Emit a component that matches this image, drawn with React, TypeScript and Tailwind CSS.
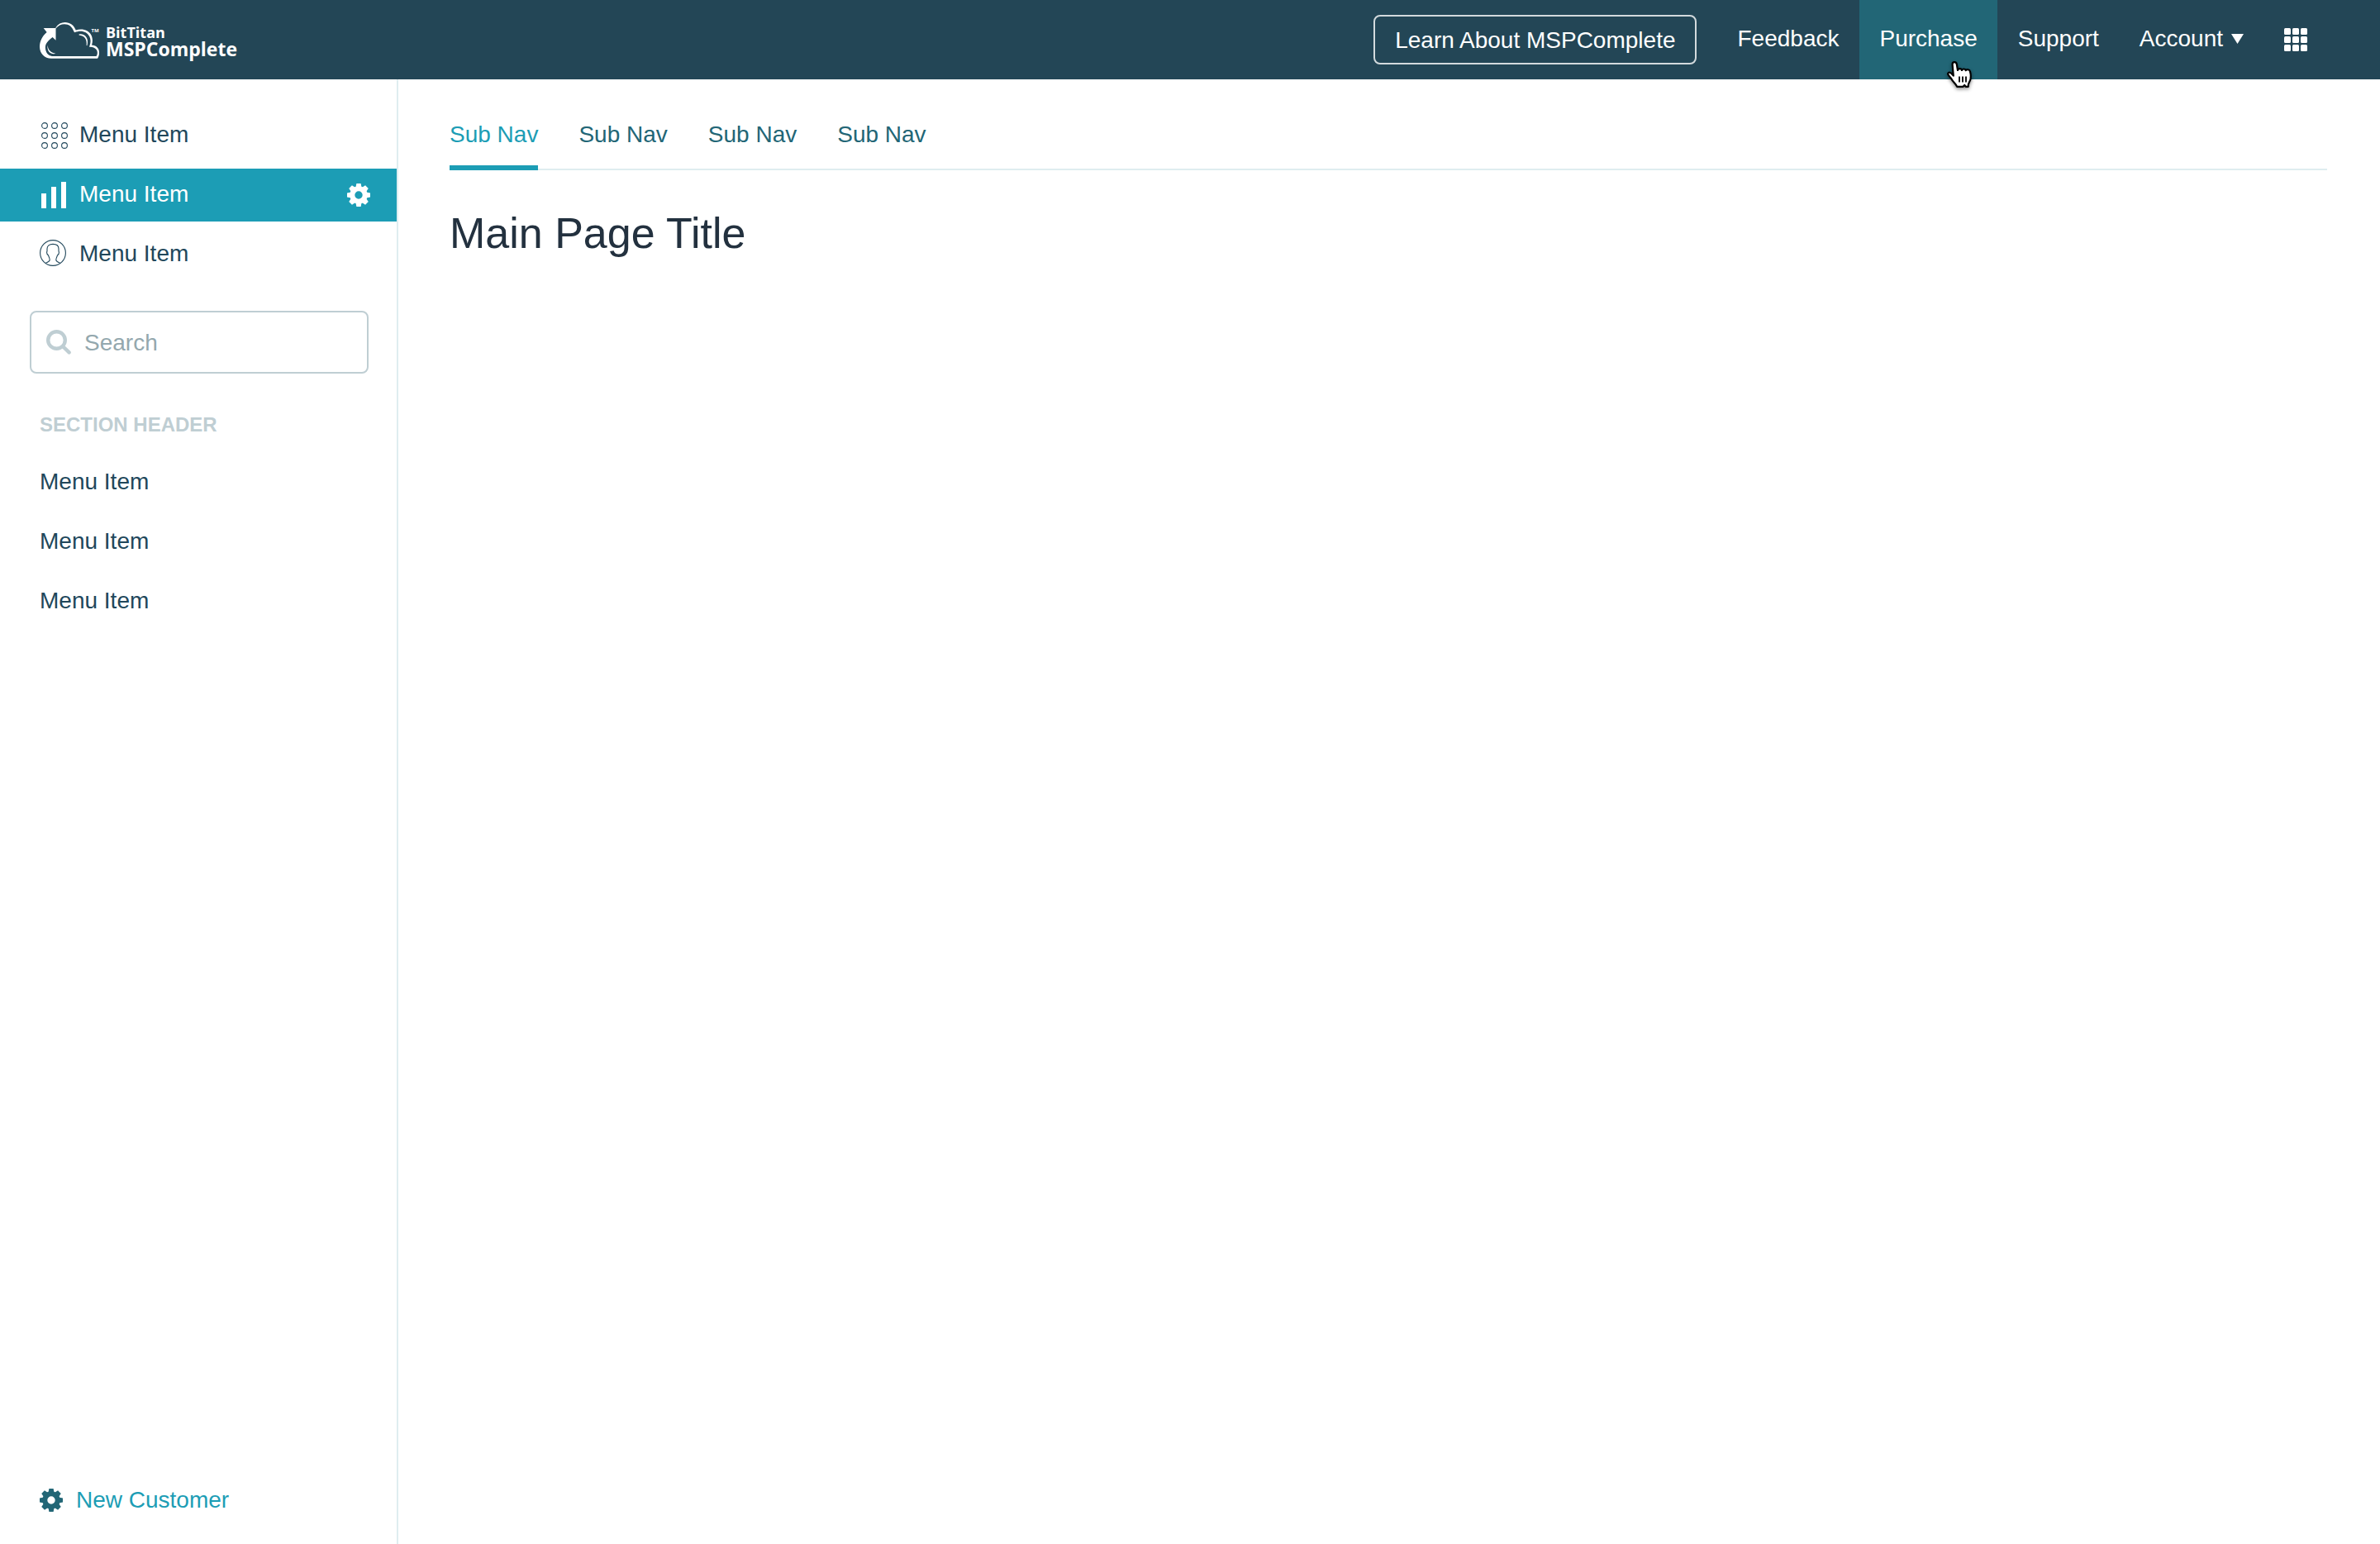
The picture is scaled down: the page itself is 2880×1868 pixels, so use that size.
import type { ReactNode } from "react";

function CloudLogo() {
  return (
    <svg viewBox="0 0 72 44" className="h-11 w-[72px] shrink-0" aria-hidden="true">
      <path
        fill="#fff"
        d="M4.7 7H19.5V21.7L15.6 17.9C10 22 6.6 26 6.9 31C7.2 36.5 10.5 40.6 15 40.9H68.6C70.2 38.6 70.2 36 69 33.6C67.4 30.8 64.2 29.6 60 29.8L60.4 28.6C62 24.6 62 20.6 60.2 17C57 10.8 49.6 9 42.4 12.2L41.6 11.6C39.4 5.4 35.6 2.2 30 2.2C25.8 2.2 22.4 4 19.5 7.4V6.2C22.2 2.2 26.2 0 30.6 0C36.8 0 41.4 3.4 43.8 9.6C51.4 7 59.2 9.4 62.4 15.4C64.2 19 64.4 23.4 63 27.6C67.2 27.9 70 29.8 71.3 32.8C72.6 36.2 72.2 40.6 70 43.8H14C6 43.6 .2 37.8 0 30C0 23 2.6 17.4 8.6 12Z"
      />
      <path fill="#fff" d="M9.6 27.4C10 33 13 36.6 19.4 37.8C14 39.4 8.4 35.4 9.6 27.4Z" />
      <path fill="#fff" d="M47.6 14.4C55 13.4 60 19.4 57.4 28.2L56.6 28C57.6 20.6 54.4 16 47.6 15.4Z" />
      <text x="62.6" y="11.8" fill="#fff" fontSize="6" fontWeight="700" fontFamily="Open Sans, sans-serif">
        TM
      </text>
    </svg>
  );
}

function GearIcon({ className }: { className: string }) {
  return (
    <svg viewBox="-14 -14 28 28" className={`size-7 shrink-0 ${className}`} fill="currentColor" aria-hidden="true">
      <circle r="7.7" fill="none" stroke="currentColor" strokeWidth="6" />
      {[0, 45, 90, 135, 180, 225, 270, 315].map((angle) => (
        <path key={angle} transform={`rotate(${angle})`} d="M-3.6 -9L-2.6 -14H2.6L3.6 -9Z" />
      ))}
    </svg>
  );
}

function DotsIcon() {
  return (
    <svg viewBox="0 0 36 36" className="size-9" fill="none" stroke="currentColor" strokeWidth="1.1" aria-hidden="true">
      {[6, 18, 30].map((y) => [6, 18, 30].map((x) => <circle key={`${x}-${y}`} cx={x} cy={y} r="3.4" />))}
    </svg>
  );
}

function BarsIcon() {
  return (
    <svg viewBox="0 0 36 36" className="size-9" fill="currentColor" aria-hidden="true">
      <path d="M2 16h6v18H2zM14 8h6v26h-6zM26 2h6v32h-6z" />
    </svg>
  );
}

function PersonIcon() {
  return (
    <svg viewBox="0 0 36 36" className="size-9" fill="none" stroke="currentColor" strokeWidth="1.1" aria-hidden="true">
      <circle cx="16" cy="16" r="15.4" />
      <path d="M7 28.4C9.6 27.4 12 26.6 12.2 24.4C12.2 22.4 11.4 21 10.4 18.8C9.4 18 8.6 17 8.6 15.4C8.6 14.6 9 14.4 9 13.6V11C9 7.4 11.6 5.4 16 5.4S23 7.4 23 11V13.6C23 14.4 23.4 14.6 23.4 15.4C23.4 17 22.6 18 21.6 18.8C20.6 21 19.8 22.4 19.8 24.4C20 26.6 22.4 27.4 25 28.4" />
    </svg>
  );
}

function SearchIcon() {
  return (
    <svg viewBox="0 0 30 30" className="size-[30px] shrink-0" fill="none" stroke="#bfced3" aria-hidden="true">
      <circle cx="12.5" cy="12.5" r="10.3" strokeWidth="4.4" />
      <path d="M20.5 20.5L27.6 27.4" strokeWidth="4.4" strokeLinecap="round" />
    </svg>
  );
}

function HandCursor() {
  return (
    <svg
      viewBox="0 0 32 36"
      className="pointer-events-none absolute top-[73px] left-[105px] z-10 h-9 w-8 overflow-visible drop-shadow-[0_2px_2px_rgba(0,0,0,0.45)]"
      aria-hidden="true"
    >
      <path
        fill="#fff"
        stroke="#000"
        strokeWidth="2.2"
        strokeLinejoin="round"
        d="M8.8 18.6L7.6 5C7.4 1.4 12 1.2 12.8 4.6L14 12C14.6 9.6 18.6 9.6 19 12C19.8 10 23.4 10 23.8 12.2C24.8 10.6 28.6 10.8 29 13.6C30 17 30 20 29.4 23C28.8 25.6 27.2 27 26.8 29.8V31.8H23.6L22.2 30L20.6 31.8H13.2C12 28.8 9.6 27.2 7.6 24.4C6.4 22.4 5.2 20.6 3.4 18.8C.6 15.4 3.6 13.2 6.2 15.8Z"
      />
      <path stroke="#000" strokeWidth="1.8" d="M16 19.4V26.4M20 19.4V26.4M24 19.4V26.4" />
    </svg>
  );
}

function TopLink({ children, active = false }: { children: ReactNode; active?: boolean }) {
  return (
    <a
      href="#"
      className={`relative flex items-center gap-[10px] px-6 pb-[2px] ${active ? "bg-[#226676]" : "hover:bg-[#226676]"}`}
    >
      {children}
    </a>
  );
}

function SideItem({ icon, active = false }: { icon?: ReactNode; active?: boolean }) {
  return (
    <li className={`flex h-16 items-center pr-8 pl-12 ${active ? "bg-[#1c9db5] text-white" : ""}`}>
      <a href="#" className="flex flex-1 items-center">
        {icon && <span className="w-12">{icon}</span>}
        <span className="pb-[2px]">Menu Item</span>
      </a>
      {active && (
        <button type="button" aria-label="Item settings">
          <GearIcon className="text-white" />
        </button>
      )}
    </li>
  );
}

export default function App() {
  return (
    <div className="flex min-h-screen flex-col bg-white font-['Liberation_Sans',Arial,sans-serif] text-[28px] leading-8 text-[#21475b]">
      <header className="flex h-24 items-stretch justify-between bg-[#234656] pr-16 pl-12 text-white">
        <a href="#" className="flex items-center gap-2 pt-[2px]" aria-label="BitTitan MSPComplete">
          <CloudLogo />
          <span className="flex flex-col font-['Open_Sans',sans-serif] font-bold">
            <span className="text-[18px] leading-5">BitTitan</span>
            <span className="text-[23px] leading-5">MSPComplete</span>
          </span>
        </a>
        <nav className="flex items-stretch gap-px" aria-label="Account links">
          <button
            type="button"
            className="mr-6 h-[60px] self-center rounded-lg border-2 border-[#d3dadd] px-6 pt-[2px]"
          >
            Learn About MSPComplete
          </button>
          <TopLink>Feedback</TopLink>
          <TopLink active>
            Purchase
            <HandCursor />
          </TopLink>
          <TopLink>Support</TopLink>
          <TopLink>
            Account
            <svg viewBox="0 0 15 12" className="h-3 w-[15px]" fill="#fff" aria-hidden="true">
              <path d="M0 0H15L7.5 12Z" />
            </svg>
          </TopLink>
          <button type="button" className="px-6" aria-label="Apps">
            <svg viewBox="0 0 28 28" className="size-7" fill="#fff" aria-hidden="true">
              {[0, 10, 20].map((y) =>
                [0, 10, 20].map((x) => <rect key={`${x}-${y}`} x={x} y={y} width="8" height="8" rx="1.5" />),
              )}
            </svg>
          </button>
        </nav>
      </header>

      <div className="flex flex-1">
        <aside className="flex w-[482px] shrink-0 flex-col border-r-2 border-[#dfedf0] pt-9 pb-5">
          <ul className="flex flex-col gap-2">
            <SideItem icon={<DotsIcon />} />
            <SideItem icon={<BarsIcon />} active />
            <SideItem icon={<PersonIcon />} />
          </ul>
          <label className="mx-9 mt-9 mr-[34px] flex h-[76px] items-center gap-4 rounded-lg border-2 border-[#bfced3] px-[18px]">
            <SearchIcon />
            <input
              type="search"
              placeholder="Search"
              aria-label="Search"
              className="min-w-0 flex-1 bg-transparent pt-[2px] outline-none placeholder:text-[#94a8ae]"
            />
          </label>
          <h2 className="mt-[46px] mb-[22px] pl-12 text-[24px] font-bold text-[#bfced3]">SECTION HEADER</h2>
          <ul className="flex flex-col gap-2">
            <SideItem />
            <SideItem />
            <SideItem />
          </ul>
          <a href="#" className="mt-auto flex h-16 items-center gap-4 pb-[2px] pl-12 text-[#1c9db5]">
            <GearIcon className="text-[#226676]" />
            <span>New Customer</span>
          </a>
        </aside>

        <main className="min-w-0 flex-1 pt-9 pr-16 pl-[62px]">
          <nav className="flex gap-[49px] border-b-2 border-[#dfedf0] text-[#226676]" aria-label="Sub navigation">
            <a href="#" aria-current="page" className="-mb-[2px] border-b-6 border-[#1c9db5] pt-[15px] pb-[21px] text-[#1c9db5]">
              Sub Nav
            </a>
            <a href="#" className="pt-[15px]">Sub Nav</a>
            <a href="#" className="pt-[15px]">Sub Nav</a>
            <a href="#" className="pt-[15px]">Sub Nav</a>
          </nav>
          <h1 className="mt-[46px] text-[52px] leading-[60px] text-[#23313f]">Main Page Title</h1>
        </main>
      </div>
    </div>
  );
}
